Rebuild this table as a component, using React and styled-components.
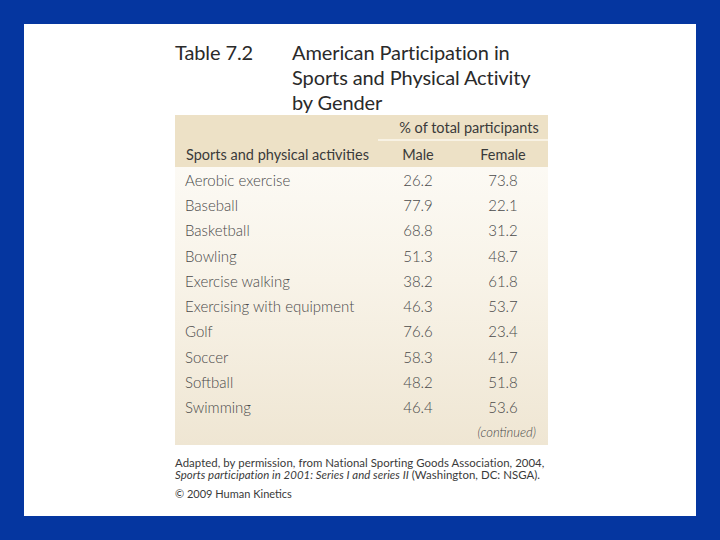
// DEPENDENCIES
import React from 'react';
import styled, { createGlobalStyle } from 'styled-components';

// DATA
const rows = [
	['Aerobic exercise', '26.2', '73.8'],
	['Baseball', '77.9', '22.1'],
	['Basketball', '68.8', '31.2'],
	['Bowling', '51.3', '48.7'],
	['Exercise walking', '38.2', '61.8'],
	['Exercising with equipment', '46.3', '53.7'],
	['Golf', '76.6', '23.4'],
	['Soccer', '58.3', '41.7'],
	['Softball', '48.2', '51.8'],
	['Swimming', '46.4', '53.6'],
];

// STYLED COMPONENTS
const Global = createGlobalStyle`
	html, body {
		margin: 0;
		background: #0536a0;
	}
	body {
		font-family: Lato, "Noto Sans", sans-serif;
	}
`

const Frame = styled.div`
	width: 720px;
	height: 540px;
	padding: 24px;
	box-sizing: border-box;
`

const Slide = styled.div`
	width: 100%;
	height: 100%;
	background: #ffffff;
	display: flex;
	flex-direction: column;
	padding: 16px 0 0 151px;
	box-sizing: border-box;
`

const Heading = styled.div`
	display: grid;
	grid-template-columns: 117px 1fr;
	font-size: 20px;
	line-height: 25px;
	color: #2a2a2a;
	letter-spacing: -0.1px;
`

const Table = styled.div`
	width: 373px;
	display: grid;
	grid-template-columns: 203px 80px 90px;
	background: linear-gradient(#fefdfa 0%, #f8f3e8 50%, #efe6d3 100%);
`

const HeadCell = styled.div`
	background: #ede1c6;
	height: 26px;
	display: flex;
	align-items: center;
	justify-content: ${p => p.$left ? 'flex-start' : 'center'};
	padding-left: ${p => p.$left ? '11px' : p.$span ? '12px' : '0'};
	grid-column: ${p => p.$span ? 'span 2' : 'auto'};
	border-bottom: ${p => p.$span ? '2px solid #f8f2e4' : 'none'};
	box-sizing: border-box;
	font-size: 14.5px;
	color: #3a3a3a;
`

const Cell = styled.div`
	height: 25.3px;
	display: flex;
	align-items: center;
	justify-content: ${p => p.$left ? 'flex-start' : 'center'};
	padding-left: ${p => p.$left ? '10px' : '0'};
	font-size: 15px;
	color: #4a4a4a;
	font-weight: 300;
`

const Continued = styled.div`
	grid-column: 1 / -1;
	height: 25px;
	display: flex;
	align-items: center;
	justify-content: flex-end;
	padding-right: 12px;
	font-size: 13px;
	font-style: italic;
	color: #4a4a4a;
	font-weight: 300;
`

const Note = styled.div`
	margin-top: 12px;
	width: 380px;
	font-size: 11.4px;
	line-height: 12.5px;
	color: #3a3a3a;
	white-space: nowrap;
	letter-spacing: 0.05px;
	& em {
		font-style: italic;
	}
`

const Credit = styled.div`
	margin-top: 5px;
	font-size: 11px;
	color: #3a3a3a;
`

export default function App() {
	return (
		<Frame>
			<Global />
			<Slide>
				<Heading>
					<div>Table 7.2</div>
					<div>
						American Participation in<br />
						Sports and Physical Activity<br />
						by Gender
					</div>
				</Heading>
				<Table>
					<HeadCell />
					<HeadCell $span>% of total participants</HeadCell>
					<HeadCell $left>Sports and physical activities</HeadCell>
					<HeadCell>Male</HeadCell>
					<HeadCell>Female</HeadCell>
					{rows.map(r => (
						<React.Fragment key={r[0]}>
							<Cell $left>{r[0]}</Cell>
							<Cell>{r[1]}</Cell>
							<Cell>{r[2]}</Cell>
						</React.Fragment>
					))}
					<Continued>(continued)</Continued>
				</Table>
				<Note>
					Adapted, by permission, from National Sporting Goods Association, 2004,<br />
					<em>Sports participation in 2001: Series I and series II</em> (Washington, DC: NSGA).
				</Note>
				<Credit>© 2009 Human Kinetics</Credit>
			</Slide>
		</Frame>
	);
}
